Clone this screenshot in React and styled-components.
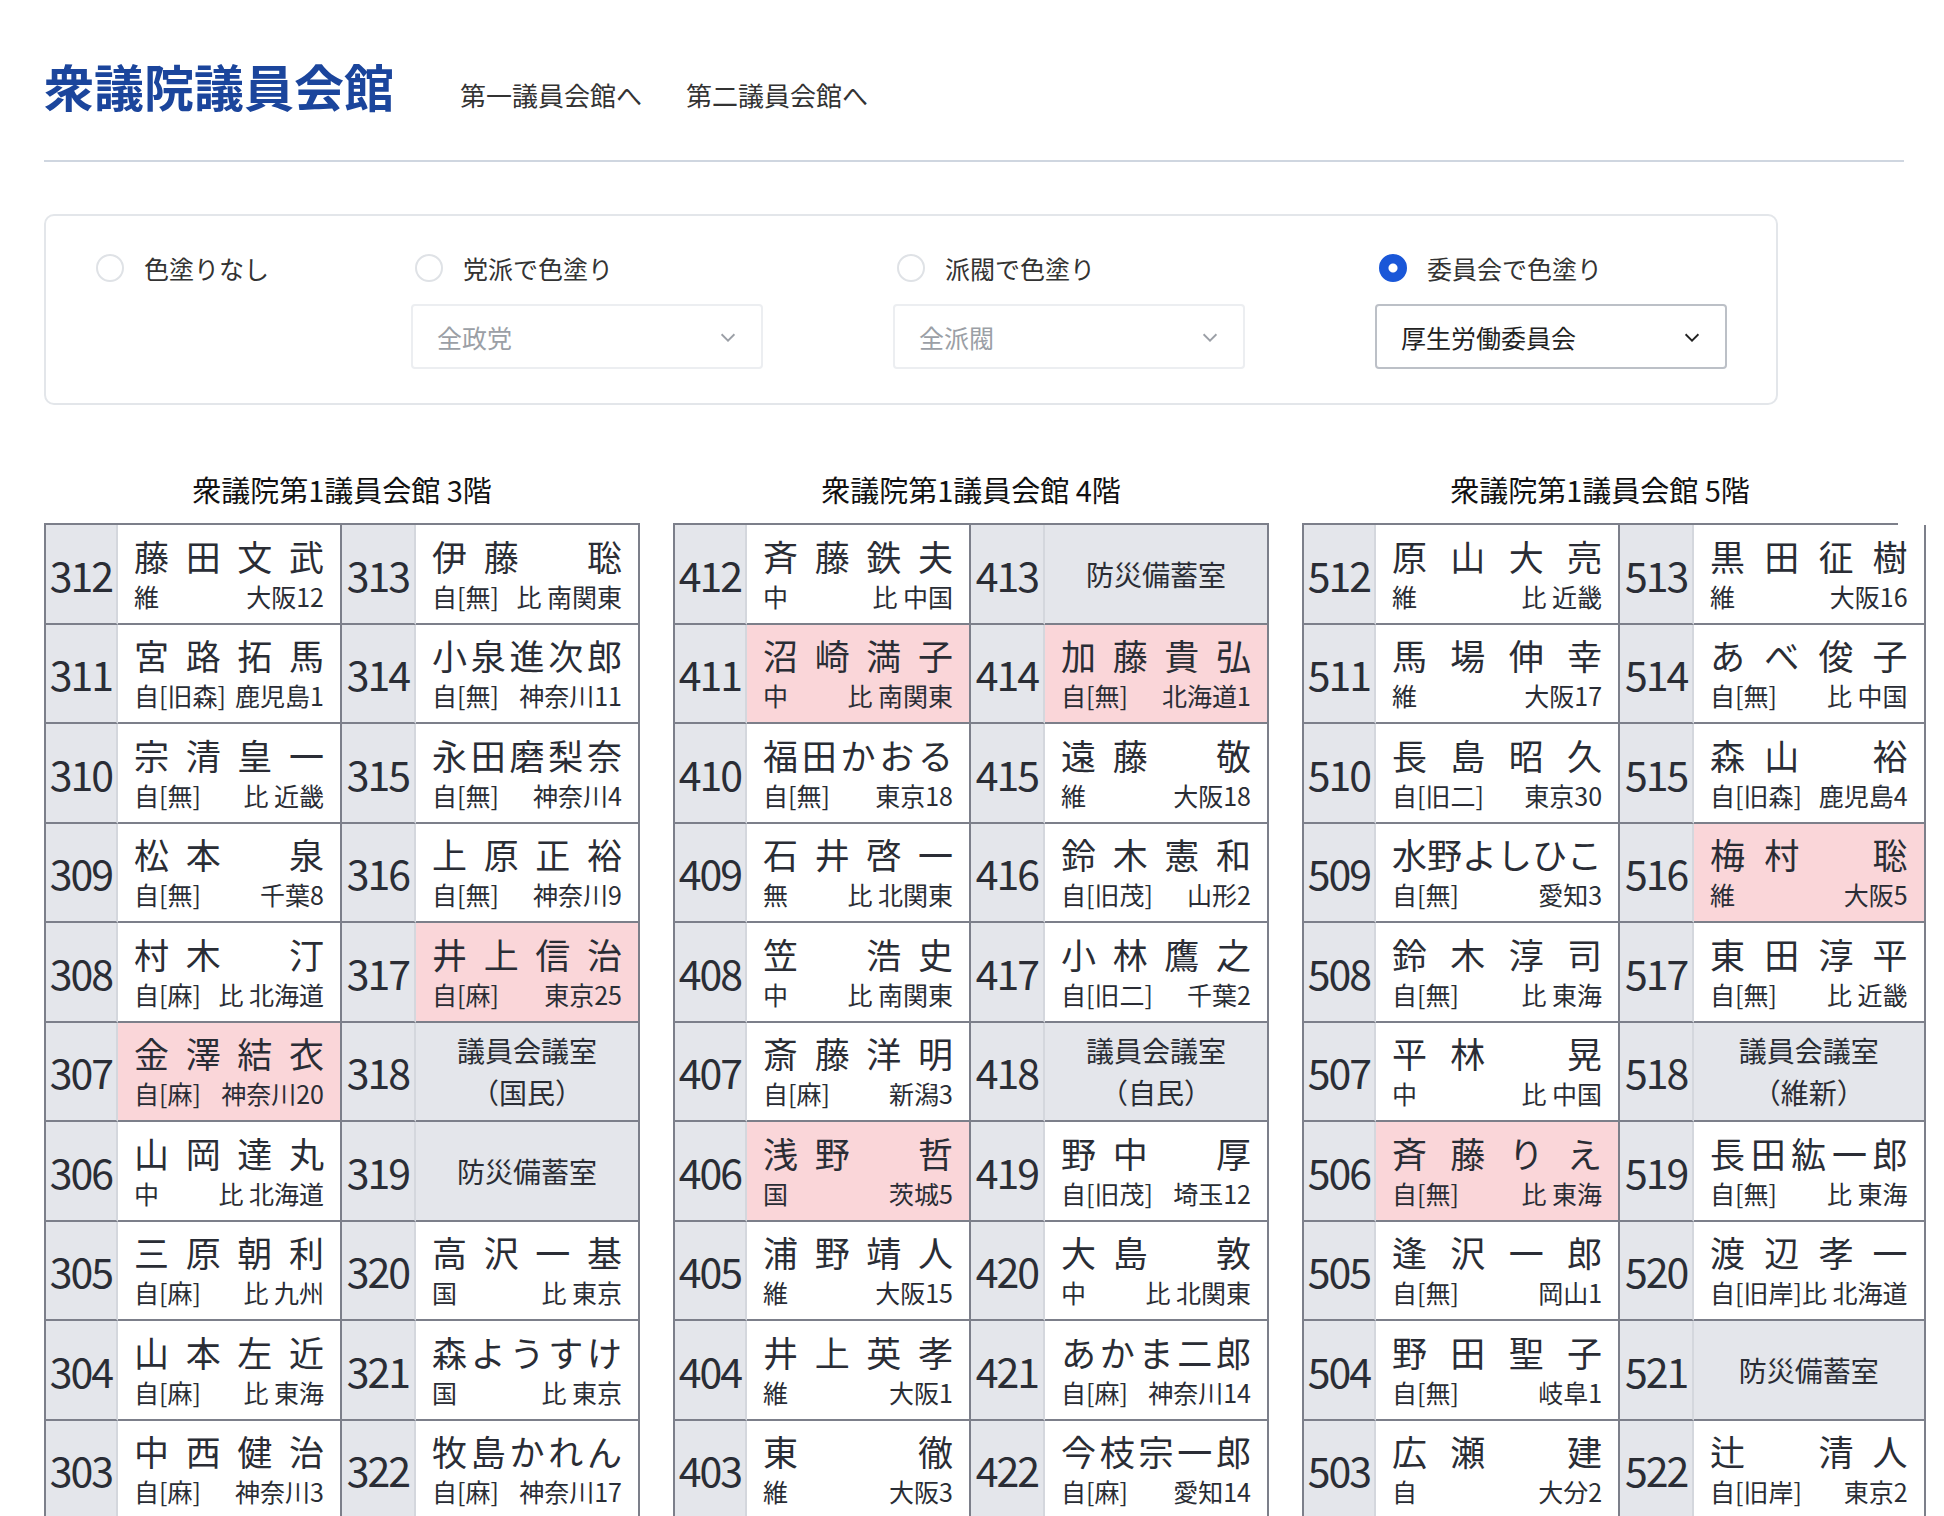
import React from "react";
import styled, { createGlobalStyle } from "styled-components";

const Global = createGlobalStyle`
  body { margin: 0; background: #fff; font-family: "Noto Sans CJK JP", "Noto Sans", sans-serif; color: #222; }
`;

const Page = styled.div`padding: 0 40px 0 44px;`;
const Header = styled.header`
  display: flex; align-items: flex-end; gap: 66px;
  height: 162px; box-sizing: border-box; padding-bottom: 50px;
  border-bottom: 2px solid #cfd6e0;
`;
const Title = styled.h1`
  margin: 0; font-size: 50px; font-weight: 700; color: #1b459c; line-height: 1;
`;
const Nav = styled.nav`display: flex; gap: 44px; padding-bottom: 2px;`;
const NavLink = styled.a`font-size: 26px; color: #333; text-decoration: none; line-height: 1;`;

const Filter = styled.div`
  margin-top: 52px; width: 1734px; height: 191px; box-sizing: border-box;
  border: 2px solid #e3e6ea; border-radius: 10px;
  display: grid; grid-template-columns: 319px 482px 482px 352px;
  padding: 34px 0 0 48px;
`;
const Opt = styled.div`display: flex; flex-direction: column; gap: 18px;`;
const RadioRow = styled.label`display: flex; align-items: center; gap: 20px; font-size: 25px; color: #333; padding-left: 2px;`;
const Radio = styled.span`
  width: 28px; height: 28px; border-radius: 50%; box-sizing: border-box; flex: none;
  border: 2px solid ${p => (p.$on ? "#1a57d8" : "#dfe2e6")};
  background: ${p => (p.$on ? "radial-gradient(circle, #fff 0 4px, #1a57d8 5px)" : "#fff")};
`;
const Select = styled.div`
  width: 352px; height: 65px; box-sizing: border-box; margin-left: -2px;
  border: 2px solid ${p => (p.$on ? "#bcc0c7" : "#eceef1")}; border-radius: 4px;
  display: flex; align-items: center; justify-content: space-between; padding: 0 22px 0 24px;
  font-size: 25px; color: ${p => (p.$on ? "#222" : "#9b9fa6")};
`;

const Tables = styled.div`display: flex; gap: 33px; margin-top: 64px;`;
const Floor = styled.div`width: 596px;`;
const FloorTitle = styled.div`text-align: center; font-size: 29px; color: #111; height: 54px; line-height: 40px;`;
const Grid = styled.div`
  display: grid; grid-template-columns: 72px 1fr 74px 1fr; grid-auto-rows: 99.5px;
  border-top: 2px solid #7c7f8a; border-left: 2px solid #7c7f8a;
`;
const Num = styled.div`
  background: #e4e6eb; border-right: 2px solid #d4d7dd; border-bottom: 2px solid #7c7f8a;
  display: flex; align-items: center; justify-content: center;
  font-size: 41px; letter-spacing: -2px; color: #2a2d35;
`;
const Cell = styled.div`
  background: ${p => (p.$pink ? "#fad6d9" : p.$room ? "#e4e6eb" : "#fff")};
  border-right: 2px solid #7c7f8a; border-bottom: 2px solid #7c7f8a;
  padding: 0 16px; box-sizing: border-box; gap: 6px;
  display: flex; flex-direction: column; justify-content: center;
  color: #2a2d35;
`;
const Name = styled.div`display: flex; justify-content: space-between; font-size: 35px; line-height: 38px;`;
const Sub = styled.div`display: flex; justify-content: space-between; font-size: 25px; line-height: 30px; white-space: nowrap;`;
const Room = styled.div`text-align: center; font-size: 28px; line-height: 36px;`;

const Chevron = () => (
  <svg width="22" height="22" viewBox="0 0 24 24" fill="none" stroke="currentColor" strokeWidth="2"><path d="M5 9l7 7 7-7" /></svg>
);

const P = (n, name, party, dist, pink) => ({ n, name, party, dist, pink });
const R = (n, room) => ({ n, room });

const floors = [
  { t: "衆議院第1議員会館 3階", rows: [
    [P(312,"藤田文武","維","大阪12"), P(313,"伊藤　聡","自[無]","比 南関東")],
    [P(311,"宮路拓馬","自[旧森]","鹿児島1"), P(314,"小泉進次郎","自[無]","神奈川11")],
    [P(310,"宗清皇一","自[無]","比 近畿"), P(315,"永田磨梨奈","自[無]","神奈川4")],
    [P(309,"松本　泉","自[無]","千葉8"), P(316,"上原正裕","自[無]","神奈川9")],
    [P(308,"村木　汀","自[麻]","比 北海道"), P(317,"井上信治","自[麻]","東京25",1)],
    [P(307,"金澤結衣","自[麻]","神奈川20",1), R(318,["議員会議室","（国民）"])],
    [P(306,"山岡達丸","中","比 北海道"), R(319,["防災備蓄室"])],
    [P(305,"三原朝利","自[麻]","比 九州"), P(320,"高沢一基","国","比 東京")],
    [P(304,"山本左近","自[麻]","比 東海"), P(321,"森ようすけ","国","比 東京")],
    [P(303,"中西健治","自[麻]","神奈川3"), P(322,"牧島かれん","自[麻]","神奈川17")],
  ]},
  { t: "衆議院第1議員会館 4階", rows: [
    [P(412,"斉藤鉄夫","中","比 中国"), R(413,["防災備蓄室"])],
    [P(411,"沼崎満子","中","比 南関東",1), P(414,"加藤貴弘","自[無]","北海道1",1)],
    [P(410,"福田かおる","自[無]","東京18"), P(415,"遠藤　敬","維","大阪18")],
    [P(409,"石井啓一","無","比 北関東"), P(416,"鈴木憲和","自[旧茂]","山形2")],
    [P(408,"笠　浩史","中","比 南関東"), P(417,"小林鷹之","自[旧二]","千葉2")],
    [P(407,"斎藤洋明","自[麻]","新潟3"), R(418,["議員会議室","（自民）"])],
    [P(406,"浅野　哲","国","茨城5",1), P(419,"野中　厚","自[旧茂]","埼玉12")],
    [P(405,"浦野靖人","維","大阪15"), P(420,"大島　敦","中","比 北関東")],
    [P(404,"井上英孝","維","大阪1"), P(421,"あかま二郎","自[麻]","神奈川14")],
    [P(403,"東　　徹","維","大阪3"), P(422,"今枝宗一郎","自[麻]","愛知14")],
  ]},
  { t: "衆議院第1議員会館 5階", rows: [
    [P(512,"原山大亮","維","比 近畿"), P(513,"黒田征樹","維","大阪16")],
    [P(511,"馬場伸幸","維","大阪17"), P(514,"あべ俊子","自[無]","比 中国")],
    [P(510,"長島昭久","自[旧二]","東京30"), P(515,"森山　裕","自[旧森]","鹿児島4")],
    [P(509,"水野よしひこ","自[無]","愛知3"), P(516,"梅村　聡","維","大阪5",1)],
    [P(508,"鈴木淳司","自[無]","比 東海"), P(517,"東田淳平","自[無]","比 近畿")],
    [P(507,"平林　晃","中","比 中国"), R(518,["議員会議室","（維新）"])],
    [P(506,"斉藤りえ","自[無]","比 東海",1), P(519,"長田紘一郎","自[無]","比 東海")],
    [P(505,"逢沢一郎","自[無]","岡山1"), P(520,"渡辺孝一","自[旧岸]","比 北海道")],
    [P(504,"野田聖子","自[無]","岐阜1"), R(521,["防災備蓄室"])],
    [P(503,"広瀬　建","自","大分2"), P(522,"辻　清人","自[旧岸]","東京2")],
  ]},
];

const Entry = ({ d }) => (
  <>
    <Num>{d.n}</Num>
    {d.room ? (
      <Cell $room>{d.room.map((l, i) => <Room key={i}>{l}</Room>)}</Cell>
    ) : (
      <Cell $pink={d.pink}>
        <Name>{[...d.name].map((c, i) => <span key={i}>{c}</span>)}</Name>
        <Sub><span>{d.party}</span><span>{d.dist}</span></Sub>
      </Cell>
    )}
  </>
);

export default function App() {
  return (
    <Page>
      <Global />
      <Header>
        <Title>衆議院議員会館</Title>
        <Nav><NavLink>第一議員会館へ</NavLink><NavLink>第二議員会館へ</NavLink></Nav>
      </Header>
      <Filter>
        <Opt><RadioRow><Radio />色塗りなし</RadioRow></Opt>
        <Opt><RadioRow><Radio />党派で色塗り</RadioRow><Select>全政党<Chevron /></Select></Opt>
        <Opt><RadioRow><Radio />派閥で色塗り</RadioRow><Select>全派閥<Chevron /></Select></Opt>
        <Opt><RadioRow><Radio $on />委員会で色塗り</RadioRow><Select $on>厚生労働委員会<Chevron /></Select></Opt>
      </Filter>
      <Tables>
        {floors.map(f => (
          <Floor key={f.t}>
            <FloorTitle>{f.t}</FloorTitle>
            <Grid>
              {f.rows.map((r, i) => (
                <React.Fragment key={i}><Entry d={r[0]} /><Entry d={r[1]} /></React.Fragment>
              ))}
            </Grid>
          </Floor>
        ))}
      </Tables>
    </Page>
  );
}
